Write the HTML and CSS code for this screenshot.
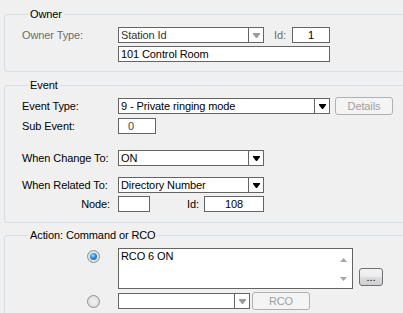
FILE: index.html
```html
<!DOCTYPE html>
<html>
<head>
<meta charset="utf-8">
<link rel="stylesheet" href="styles.css">
</head>
<body>
<div class="page">
  <fieldset class="group g-owner">
    <legend>Owner</legend>
    <div class="row">
      <span class="label dis">Owner Type:</span>
      <div class="combo dis w146"><span class="val">Station Id</span><span class="drop"><svg width="7" height="5" viewBox="0 0 7 5"><polygon points="0,0 7,0 7,1 4,5 3,5 0,1"/></svg></span></div>
      <span class="idlabel dis">Id:</span>
      <div class="box center w38">1</div>
    </div>
    <div class="row gap3">
      <span class="label"></span>
      <div class="box w212">101 Control Room</div>
    </div>
  </fieldset>

  <fieldset class="group g-event">
    <legend>Event</legend>
    <div class="row">
      <span class="label">Event Type:</span>
      <div class="combo w212"><span class="val">9 - Private ringing mode</span><span class="drop"><svg width="7" height="5" viewBox="0 0 7 5"><polygon points="0,0 7,0 7,1 4,5 3,5 0,1"/></svg></span></div>
      <button class="btn dis details">Details</button>
    </div>
    <div class="row gap4">
      <span class="label">Sub Event:</span>
      <div class="box w38 sub">0</div>
    </div>
    <div class="row gap16">
      <span class="label">When Change To:</span>
      <div class="combo w146"><span class="val">ON</span><span class="drop"><svg width="7" height="5" viewBox="0 0 7 5"><polygon points="0,0 7,0 7,1 4,5 3,5 0,1"/></svg></span></div>
    </div>
    <div class="row gap11">
      <span class="label">When Related To:</span>
      <div class="combo w146"><span class="val">Directory Number</span><span class="drop"><svg width="7" height="5" viewBox="0 0 7 5"><polygon points="0,0 7,0 7,1 4,5 3,5 0,1"/></svg></span></div>
    </div>
    <div class="row gap3">
      <span class="label right">Node:</span>
      <div class="box w32"></div>
      <span class="idlabel2">Id:</span>
      <div class="box center w60">108</div>
    </div>
  </fieldset>

  <fieldset class="group g-action">
    <legend>Action: Command or RCO</legend>
    <div class="row top">
      <span class="radiocell"><span class="radio on"></span></span>
      <div class="area">
        <span class="areatext">RCO 6 ON</span>
        <span class="scroll">
          <svg width="7" height="4" viewBox="0 0 7 4"><polygon points="3.5,0 7,4 0,4"/></svg>
          <svg width="7" height="4" viewBox="0 0 7 4"><polygon points="0,0 7,0 3.5,4"/></svg>
        </span>
      </div>
      <button class="btn dots">...</button>
    </div>
    <div class="row gap4">
      <span class="radiocell"><span class="radio"></span></span>
      <div class="combo dis w132"><span class="val"></span><span class="drop"><svg width="7" height="5" viewBox="0 0 7 5"><polygon points="0,0 7,0 7,1 4,5 3,5 0,1"/></svg></span></div>
      <button class="btn dis rco">RCO</button>
    </div>
  </fieldset>
</div>
</body>
</html>
```
FILE: styles.css
```css
html, body {
  margin: 0;
  padding: 0;
  overflow: hidden;
  background: #f0f0f0;
}
body {
  font-family: "Liberation Sans", Arial, sans-serif;
  font-size: 11px;
  letter-spacing: -0.1px;
  color: #000;
}
.page {
  width: 403px;
  height: 313px;
  overflow: hidden;
  padding-left: 4px;
  box-sizing: border-box;
}
.group {
  width: 440px;
  box-sizing: border-box;
  border: 1px solid #d5dfe5;
  border-radius: 3px;
  margin: 0;
  padding: 6px 0 0 17px;
  min-width: 0;
}
.group legend {
  padding: 0 2px;
  margin-left: 6px;
  line-height: 13px;
  height: 13px;
}
.g-owner { margin-top: 8px; padding-bottom: 9px; }
.g-event { margin-top: 7px; padding-bottom: 10px; }
.g-action { margin-top: 6px; padding-bottom: 20px; }

.row {
  display: flex;
  align-items: center;
  height: 16px;
}
.row.top { align-items: flex-start; height: auto; }
.gap3 { margin-top: 3px; }
.gap4 { margin-top: 4px; }
.gap11 { margin-top: 11px; }
.gap16 { margin-top: 16px; }

.label {
  width: 96px;
  flex: none;
  white-space: nowrap;
  line-height: 16px;
}
.label.right { text-align: right; width: 88px; padding-right: 8px; }
.dis { color: #6d6d6d; }

.box, .combo {
  height: 16px;
  box-sizing: border-box;
  border: 1px solid #646464;
  background: #fff;
  line-height: 14px;
  padding-left: 2px;
  white-space: nowrap;
  flex: none;
}
.box.center { text-align: center; padding-left: 0; }
.box.sub { padding-left: 9px; color: #444; }
.w38 { width: 38px; }
.w212 { width: 212px; }
.w146 { width: 146px; }
.w132 { width: 132px; }
.w32 { width: 32px; }
.w60 { width: 60px; }

.combo {
  display: flex;
  padding-left: 0;
}
.combo .val { flex: 1; padding-left: 2px; overflow: hidden; }
.combo.dis .val { color: #333; }
.combo .drop {
  width: 15px;
  border-left: 1px solid #646464;
  display: flex;
  align-items: center;
  justify-content: center;
  box-sizing: border-box;
  padding-top: 1px;
}
.combo .drop svg { fill: #000; display: block; }
.combo.dis .drop svg { fill: #9a9a9a; }

.idlabel { margin-left: 10px; width: 18px; flex: none; }
.idlabel2 { margin-left: 37px; width: 17px; flex: none; }

.btn {
  font-family: inherit;
  font-size: 11px;
  letter-spacing: -0.1px;
  box-sizing: border-box;
  padding: 0;
  margin: 0;
  border-radius: 3px;
  flex: none;
}
.btn.dis {
  border: 1px solid #adb2b5;
  background: #f4f4f4;
  color: #a0a0a0;
  height: 18px;
  width: 58px;
}
.details { margin-left: 5px; }
.rco { margin-left: 2px; }
.dots {
  width: 24px;
  height: 18px;
  margin-left: 6px;
  margin-top: 20px;
  border: 1px solid #707070;
  background: linear-gradient(#f2f2f2 0%, #ebebeb 50%, #dddddd 51%, #cfcfcf 100%);
  color: #000;
  line-height: 14px;
}

.radiocell {
  width: 96px;
  flex: none;
  display: flex;
  justify-content: flex-end;
  padding-right: 18px;
  box-sizing: border-box;
}
.row.top .radiocell { padding-top: 2px; }
.radio {
  width: 13px;
  height: 13px;
  box-sizing: border-box;
  border-radius: 50%;
  border: 1px solid #8e8f8f;
  background: radial-gradient(circle at 50% 50%, #f4f4f4 0%, #e2e2e2 60%, #d0d0d0 100%);
  position: relative;
}
.radio.on::after {
  content: "";
  position: absolute;
  left: 2px;
  top: 2px;
  width: 7px;
  height: 7px;
  border-radius: 50%;
  background: radial-gradient(circle at 40% 35%, #9fd8ff 0%, #2b8ed8 45%, #0d4f8f 100%);
}

.area {
  width: 235px;
  height: 41px;
  box-sizing: border-box;
  border: 1px solid #646464;
  background: #fff;
  display: flex;
  flex: none;
}
.areatext { flex: 1; padding: 1px 0 0 2px; line-height: 13px; }
.scroll {
  width: 17px;
  display: flex;
  flex-direction: column;
  justify-content: space-between;
  align-items: center;
  padding: 9px 0 7px;
  box-sizing: border-box;
}
.scroll svg { fill: #a6a6a6; display: block; }
```
